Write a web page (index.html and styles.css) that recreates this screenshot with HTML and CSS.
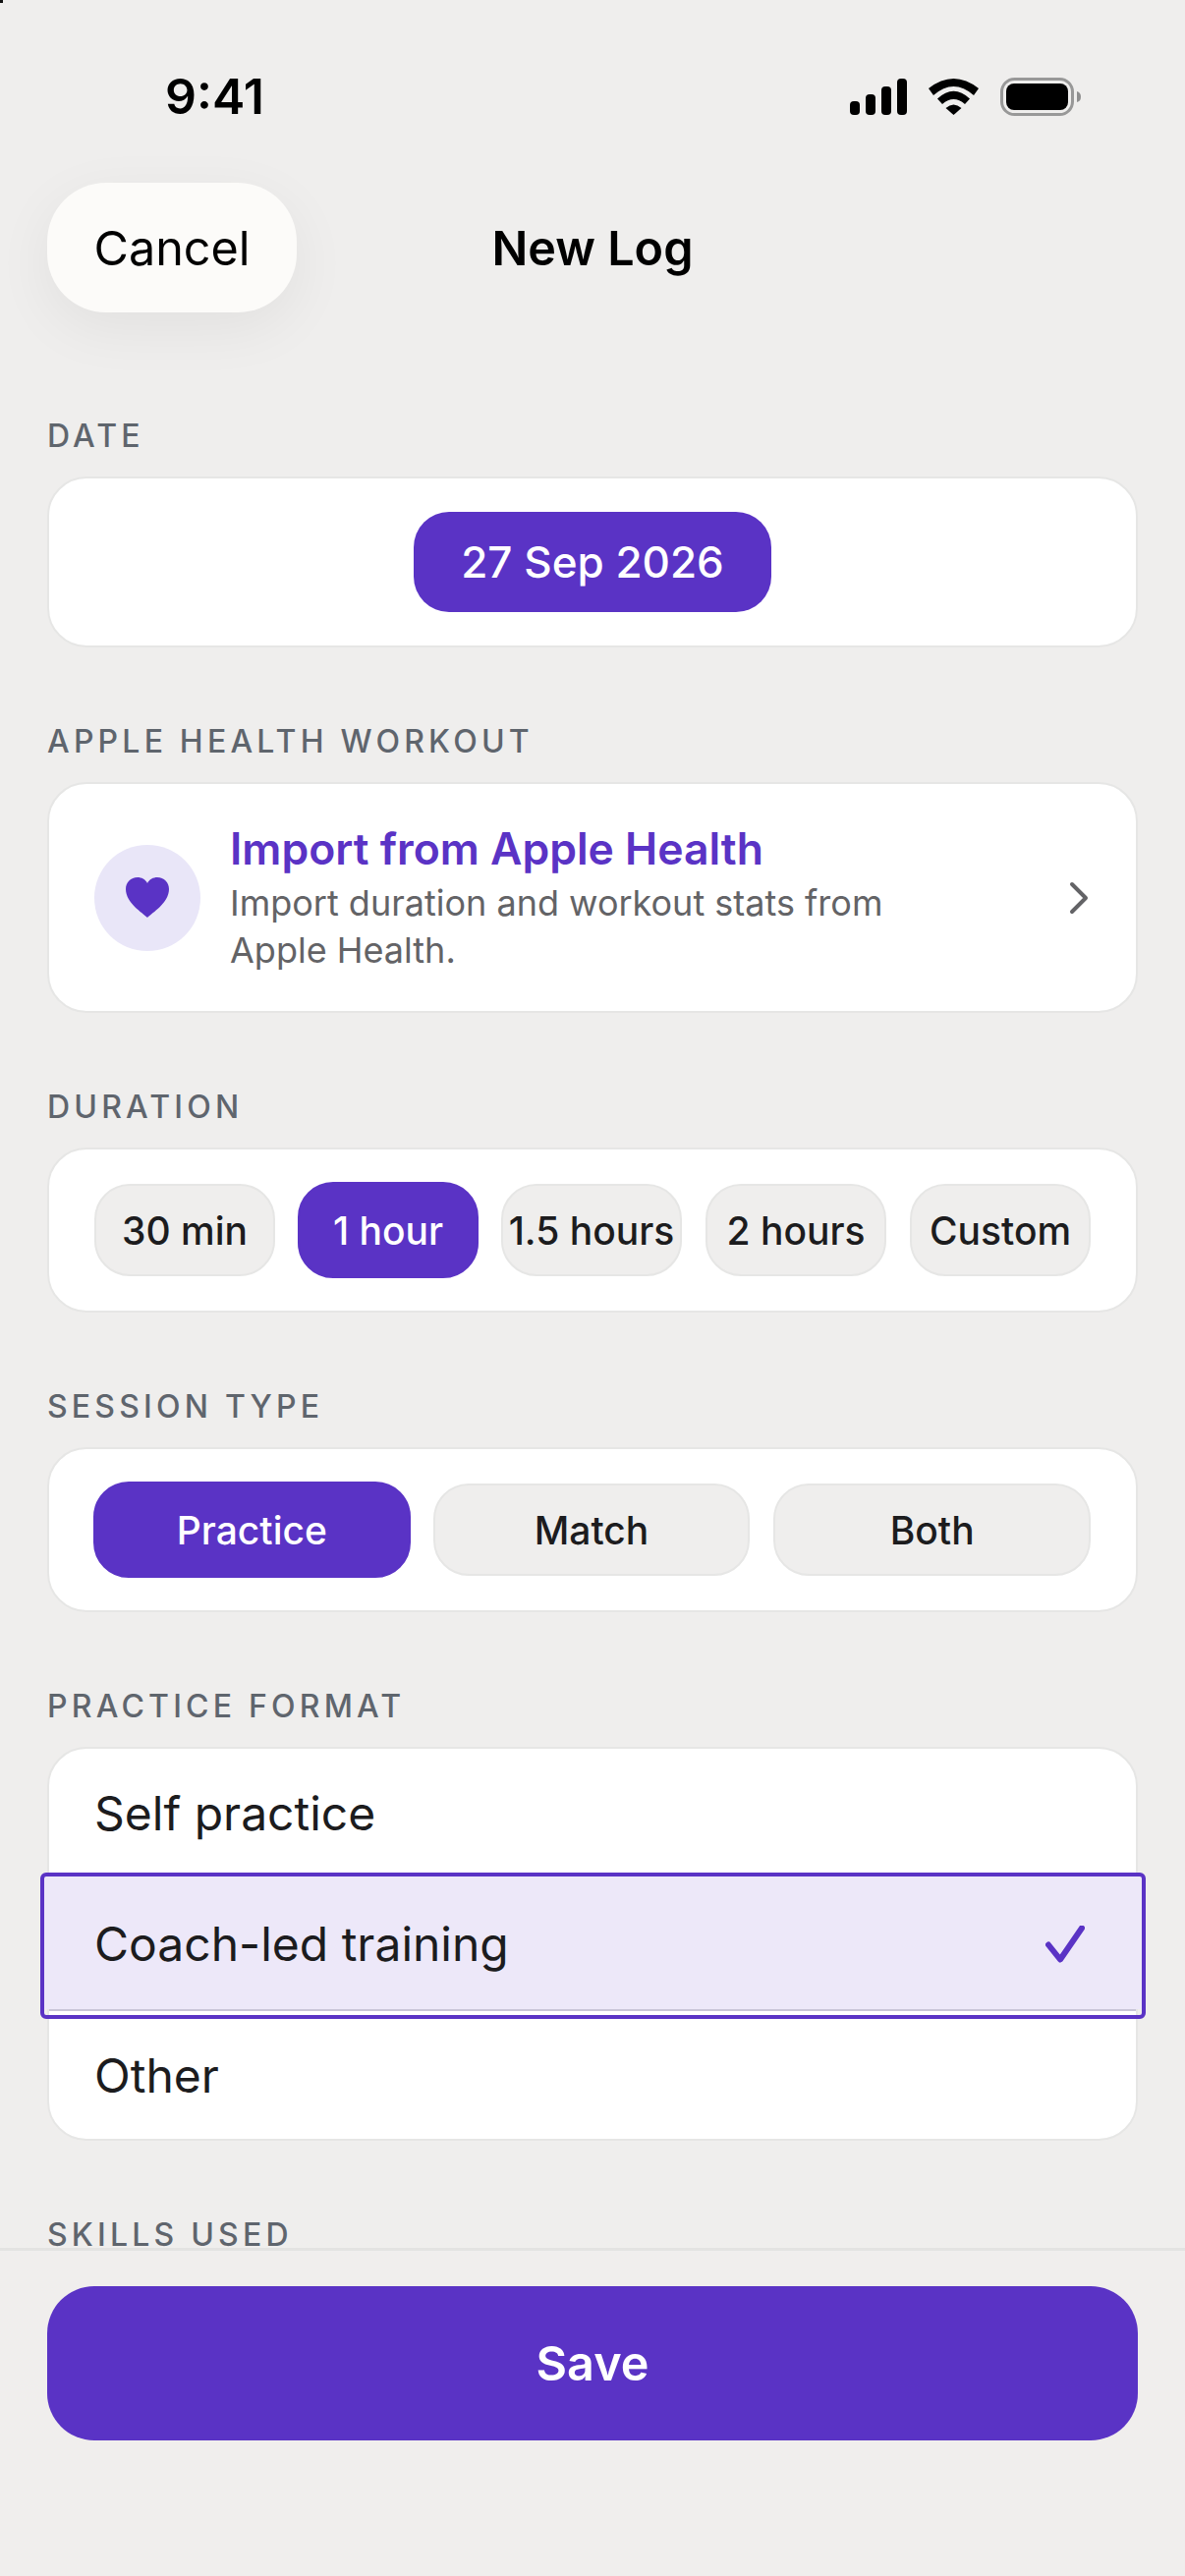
FILE: index.html

```html
<!DOCTYPE HTML>
<html>
<head>
<meta charset="utf-8">
<title>New Log</title>
<link rel="stylesheet" href="styles.css">
</head>

<body>
<div class="corner-dot"></div>
<div class="app">
	<div class="scroll">
		<div class="status">
			<span class="time">9:41</span>
			<div class="status-icons">
				<svg width="58" height="37" viewBox="0 0 58 37"><rect x="0" y="23" width="10" height="14" rx="4"/><rect x="16" y="16" width="10" height="21" rx="4"/><rect x="32" y="8" width="10" height="29" rx="4"/><rect x="48" y="0" width="10" height="37" rx="4"/></svg>
				<svg width="51" height="37" viewBox="0 0 51 37"><path d="M0 10Q25.500 -10 51 10L46 17Q25.500 -1 5 17Z"/><path d="M9 20.500Q25.500 5 42 20.500L37 26Q25.500 16 14 26Z"/><path d="M17.500 30Q25.500 23 33.500 30L25.500 37Z"/></svg>
				<svg width="82" height="39" viewBox="0 0 82 39"><rect x="1.500" y="1.500" width="72" height="36" rx="13" fill="none" stroke="#989898" stroke-width="3"/><rect x="6" y="6" width="63" height="27" rx="8"/><path d="M78 14Q82 15 82 19.500Q82 24 78 25Z" fill="#8f8f8f"/></svg>
			</div>
		</div>

		<div class="nav">
			<div class="cancel">Cancel</div>
			<div class="title">New Log</div>
			<div></div>
		</div>

		<div class="section first">
			<div class="label">DATE</div>
			<div class="card date-card">
				<div class="date-pill">27 Sep 2026</div>
			</div>
		</div>

		<div class="section">
			<div class="label">APPLE HEALTH WORKOUT</div>
			<div class="card health-card">
				<div class="health-icon">
					<svg width="44" height="41" viewBox="0 0 44 41"><path d="M22 41C17 36 0 26 0 12C0 5 5 0 12 0C16 0 20 2 22 6C24 2 28 0 32 0C39 0 44 5 44 12C44 26 27 36 22 41Z" fill="#5a33c5"/></svg>
				</div>
				<div class="health-text">
					<div class="health-title">Import from Apple Health</div>
					<div class="health-desc">Import duration and workout stats from Apple Health.</div>
				</div>
				<svg class="chevron" width="20" height="34" viewBox="0 0 20 34"><path d="M3 3L17 17L3 31" fill="none" stroke="#636366" stroke-width="4" stroke-linecap="round" stroke-linejoin="round"/></svg>
			</div>
		</div>

		<div class="section">
			<div class="label">DURATION</div>
			<div class="card chips">
				<div class="chip">30 min</div>
				<div class="chip on">1 hour</div>
				<div class="chip">1.5 hours</div>
				<div class="chip">2 hours</div>
				<div class="chip">Custom</div>
			</div>
		</div>

		<div class="section">
			<div class="label">SESSION TYPE</div>
			<div class="card chips">
				<div class="chip on">Practice</div>
				<div class="chip">Match</div>
				<div class="chip">Both</div>
			</div>
		</div>

		<div class="section">
			<div class="label">PRACTICE FORMAT</div>
			<div class="card format-card">
				<div class="row">Self practice</div>
				<div class="row selected">
					<span>Coach-led training</span>
					<svg width="40" height="38" viewBox="0 0 40 38"><path d="M3 19.500L15 34.500L37 2.500" fill="none" stroke="#5a33c5" stroke-width="6" stroke-linecap="round" stroke-linejoin="round"/></svg>
				</div>
				<div class="row">Other</div>
			</div>
		</div>

		<div class="section last">
			<div class="label">SKILLS USED</div>
		</div>
	</div>

	<div class="footer">
		<div class="save">Save</div>
	</div>
</div>
</body>
</html>
```

FILE: styles.css

```css
* {margin:0; padding:0; box-sizing:border-box; }

body {
	background:#efeeed;
	font-family:"Inter","Noto Sans",sans-serif;
	color:#1c1c1e;
}

.corner-dot {
	position:absolute;
	left:0;
	top:0;
	width:3px;
	height:3px;
	background:#111;
}

.app {
	width:1206px;
	height:2622px;
	display:flex;
	flex-direction:column;
	overflow:hidden;
}
.scroll {
	flex:1;
	min-height:0;
	overflow:hidden;
	padding:72px 48px 0;
}

/* status bar */
.status {
	height:52px;
	display:flex;
	align-items:center;
	justify-content:space-between;
	padding:0 58px 0 120px;
}
.time {font-size:50px; font-weight:600; color:#000; }
.status-icons {display:flex; align-items:center; gap:22px; }

/* nav */
.nav {
	margin-top:62px;
	height:132px;
	display:grid;
	grid-template-columns:1fr auto 1fr;
	align-items:center;
}
.cancel {
	width:254px;
	height:132px;
	border-radius:60px;
	background:#fcfbf9;
	box-shadow:0 16px 60px rgba(0,0,0,0.06);
	font-size:48.500px;
	color:#000;
	display:flex;
	align-items:center;
	justify-content:center;
}
.title {font-size:48.500px; font-weight:600; color:#000; }

/* sections */
.section {margin-top:78px; }
.section.first {margin-top:108px; }
.section.last {margin-top:83px; }
.section.last .label {height:26px; line-height:26px; margin-bottom:0; }
.label {
	height:36px;
	line-height:36px;
	margin-bottom:23px;
	font-size:32px;
	font-weight:500;
	letter-spacing:4.200px;
	color:#5f656d;
}
.card {
	background:#fff;
	border:2px solid #e6e6e5;
	border-radius:40px;
}

.date-card {
	padding:34px 0;
	display:flex;
	justify-content:center;
}
.date-pill {
	width:364px;
	height:102px;
	border-radius:36px;
	background:#5a33c5;
	color:#fff;
	font-size:44px;
	font-weight:500;
	display:flex;
	align-items:center;
	justify-content:center;
}

.health-card {
	padding:38px 46px;
	display:flex;
	align-items:center;
}
.health-icon {
	width:108px;
	height:108px;
	flex:none;
	border-radius:50%;
	background:#e9e6f8;
	display:flex;
	align-items:center;
	justify-content:center;
	margin-right:30px;
}
.health-text {flex:1; padding-right:120px; }
.health-title {
	font-size:44.500px;
	line-height:56px;
	font-weight:600;
	color:#5a33c5;
	margin-bottom:3px;
}
.health-desc {font-size:36px; line-height:48px; color:#636366; }
.chevron {flex:none; margin-right:2px; }

.chips {
	padding:33px 46px;
	height:168px;
	display:flex;
	align-items:center;
	gap:24px;
}
.chip {
	flex:1;
	height:94px;
	border-radius:36px;
	background:#efeeed;
	border:2px solid #e6e6e5;
	font-size:39px;
	font-weight:500;
	white-space:nowrap;
	display:flex;
	align-items:center;
	justify-content:center;
}
.chip.on {
	height:98px;
	margin:0 -1px;
	background:#5a33c5;
	border-color:#5a33c5;
	color:#fff;
}

.row {
	height:130px;
	padding:0 52px 0 46px;
	display:flex;
	align-items:center;
	justify-content:space-between;
	font-size:48px;
}
.row.selected {
	height:137px;
	position:relative;
	z-index:1;
}
/* tint stops short of the purple frame at the bottom */
.row.selected::after {
	content:"";
	position:absolute;
	z-index:-1;
	top:-4px;
	bottom:-8px;
	left:-9px;
	right:-10px;
	border:4px solid #5a33c5;
	border-radius:6px;
	background:linear-gradient(#ede8f9,#ede8f9) no-repeat;
	background-size:100% calc(100% - 6px);
}
.row.selected::before {
	content:"";
	position:absolute;
	left:0;
	right:0;
	bottom:0;
	height:2px;
	background:#c9c5d8;
}

/* footer */
.footer {
	flex:none;
	height:334px;
	border-top:3px solid #e3e3e2;
	background:#f0eeed;
	padding:36px 48px 0;
}
.save {
	height:157px;
	border-radius:48px;
	background:#5a33c5;
	color:#fff;
	font-size:48.500px;
	font-weight:600;
	display:flex;
	align-items:center;
	justify-content:center;
}
```
